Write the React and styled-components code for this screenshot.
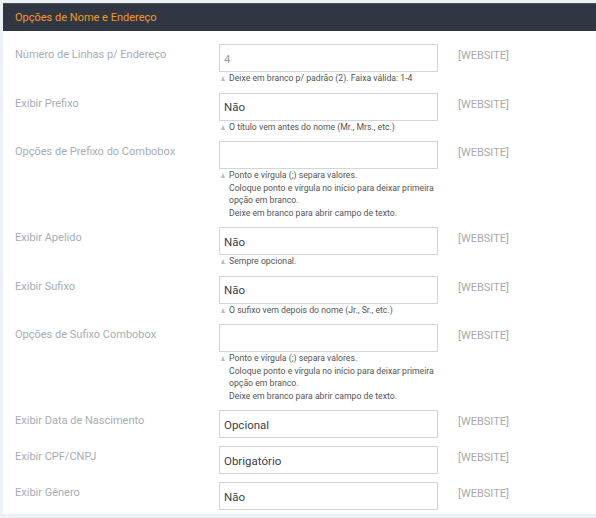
import React from 'react';
import styled, { createGlobalStyle } from 'styled-components';

const GlobalStyle = createGlobalStyle`
  html, body {
    margin: 0;
    padding: 0;
    background: #edf0f4;
    font-family: Roboto, "Liberation Sans", sans-serif;
  }
`;

const Page = styled.div`
  padding: 3px 0 3px 3px;
`;

const Panel = styled.section`
  background: #ffffff;
`;

const Header = styled.header`
  height: 28px;
  display: flex;
  align-items: center;
  padding-left: 12px;
  background: #313643;
  border-top: 1px solid #4a4f5a;
  box-sizing: border-box;
  color: #f39a21;
  font-size: 11px;
`;

const Body = styled.div`
  padding: 13px 0 4px 12px;
  display: flex;
  flex-direction: column;
  gap: 8px;
`;

const Row = styled.div`
  display: grid;
  grid-template-columns: 184px 219px auto;
  column-gap: 20px;
  align-items: start;
`;

const Label = styled.div`
  padding-top: 4px;
  font-size: 11px;
  line-height: 14px;
  color: #a7adb6;
`;

const Field = styled.div`
  display: flex;
  flex-direction: column;
`;

const Input = styled.input`
  box-sizing: border-box;
  width: 219px;
  height: 28px;
  margin: 0;
  padding: 1px 4px 0;
  border: 1px solid #d3d5d9;
  border-radius: 0;
  outline: none;
  background: #fff;
  font-family: Roboto, "Liberation Sans", sans-serif;
  font-size: 11.5px;
  color: #3b3f48;

  &::placeholder {
    color: #9a9a9a;
  }
`;

const Help = styled.div`
  position: relative;
  padding-left: 10px;
  font-size: 8.7px;
  line-height: 12.5px;
  color: #555;
`;

const Caret = styled.span`
  position: absolute;
  left: 2px;
  top: 4px;
  width: 0;
  height: 0;
  border-left: 2.5px solid transparent;
  border-right: 2.5px solid transparent;
  border-bottom: 5px solid #b9bcc0;
`;

const Scope = styled.div`
  padding-top: 5px;
  font-size: 11px;
  line-height: 14px;
  color: #a9a9a9;
`;

const separaHelp = [
  'Ponto e vírgula (;) separa valores.',
  'Coloque ponto e vírgula no início para deixar primeira opção em branco.',
  'Deixe em branco para abrir campo de texto.',
];

const fields = [
  { label: 'Número de Linhas p/ Endereço', placeholder: '4', help: ['Deixe em branco p/ padrão (2). Faixa válida: 1-4'] },
  { label: 'Exibir Prefixo', value: 'Não', help: ['O título vem antes do nome (Mr., Mrs., etc.)'] },
  { label: 'Opções de Prefixo do Combobox', value: '', help: separaHelp },
  { label: 'Exibir Apelido', value: 'Não', help: ['Sempre opcional.'] },
  { label: 'Exibir Sufixo', value: 'Não', help: ['O sufixo vem depois do nome (Jr., Sr., etc.)'] },
  { label: 'Opções de Sufixo Combobox', value: '', help: separaHelp },
  { label: 'Exibir Data de Nascimento', value: 'Opcional' },
  { label: 'Exibir CPF/CNPJ', value: 'Obrigatório' },
  { label: 'Exibir Gênero', value: 'Não' },
];

function HelpText({ lines }) {
  return (
    <Help>
      <Caret />
      {lines.map((line, i) => (
        <div key={i}>{line}</div>
      ))}
    </Help>
  );
}

export default function App() {
  return (
    <>
      <GlobalStyle />
      <Page>
        <Panel>
          <Header>Opções de Nome e Endereço</Header>
          <Body>
            {fields.map((f) => (
              <Row key={f.label}>
                <Label>{f.label}</Label>
                <Field>
                  <Input readOnly value={f.value ?? ''} placeholder={f.placeholder} />
                  {f.help && <HelpText lines={f.help} />}
                </Field>
                <Scope>[WEBSITE]</Scope>
              </Row>
            ))}
          </Body>
        </Panel>
      </Page>
    </>
  );
}
